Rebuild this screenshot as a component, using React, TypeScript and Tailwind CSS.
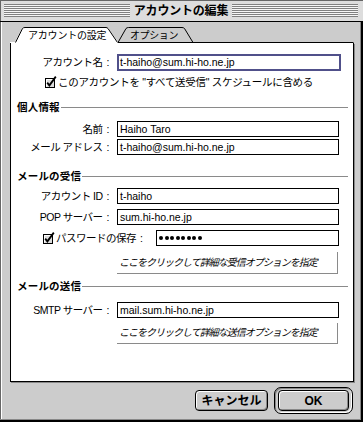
import React from "react";

function Check() {
  return (
    <svg width="12" height="12" viewBox="0 0 12 12" className="shrink-0">
      <rect x="0.5" y="2.5" width="9" height="9" fill="#dcdcdc" stroke="#000" />
      <path d="M1.5 10.5 V3.5 H8.5" fill="none" stroke="#fff" />
      <path d="M2.2 6.6 L4.4 9.4 L10.8 0.6" fill="none" stroke="#000" strokeWidth="1.8" />
    </svg>
  );
}

function Field({ value, className }: { value: string; className: string }) {
  return (
    <div className={`flex h-[16px] items-center border border-black bg-white pl-[2px] text-[10.5px] leading-none ${className}`}>
      {value}
    </div>
  );
}

function Label({ text }: { text: string }) {
  return (
    <div className="flex w-[101px] justify-end pr-[3px] text-[10.5px] leading-none tracking-[-0.5px]">
      <span>{text}</span>
      <span className="ml-[4px]">:</span>
    </div>
  );
}

function Row({ label, value, className }: { label: string; value: string; className: string }) {
  return (
    <div className={`flex items-center ${className}`}>
      <Label text={label} />
      <Field value={value} className="ml-[5px] w-[222px]" />
    </div>
  );
}

function Section({ title, className }: { title: string; className: string }) {
  return (
    <div className={`flex h-[12px] items-center pl-[6px] pr-[5px] ${className}`}>
      <span className="text-[10.5px] font-bold leading-none tracking-[0.2px]">{title}</span>
      <div className="ml-[1px] h-px flex-1 bg-[#8a8a8a]" />
    </div>
  );
}

function LinkButton({ text, className }: { text: string; className: string }) {
  return (
    <div className={`ml-[106px] flex w-[221px] items-center border-r border-b border-[#8a8a8a] bg-white pl-[2px] text-[10px] italic leading-none tracking-[-1px] ${className}`}>
      {text}
    </div>
  );
}

const Stripes = () => (
  <div className="h-[13px] flex-1 bg-[repeating-linear-gradient(to_bottom,#808080_0px,#808080_1px,#f6f6f6_1px,#f6f6f6_2px)]" />
);

export default function App() {
  return (
    <div className="relative flex h-[422px] w-[363px] flex-col bg-[#cccccc] font-['Liberation_Sans','Noto_Sans_CJK_JP',sans-serif] text-black shadow-[inset_-2px_-2px_0_#000,inset_-3px_-3px_0_#888,inset_1px_1px_0_#666,inset_2px_2px_0_#fff]">
      {/* title bar */}
      <div className="flex h-[22px] items-center border-b border-black bg-[#dddddd] pl-[4px] pr-[5px] shadow-[inset_1px_1px_0_#666]">
        <Stripes />
        <div className="px-[4px] text-[12px] font-bold leading-none tracking-[-0.2px]">アカウントの編集</div>
        <Stripes />
      </div>

      {/* tabs */}
      <div className="relative mt-[5px] flex h-[16px] items-center pt-[2px] text-[10px] leading-none">
        <svg className="absolute inset-0" width="363" height="16" viewBox="0 0 363 16">
          <path d="M118 15.5 L126 1.5 Q127 0.5 128.5 0.5 L182 0.5 Q183.5 0.5 184.5 1.5 L193 15.5" fill="#cccccc" stroke="#000" />
          <path d="M10.5 16 V15.5 H15.5 M117 15.5 H353.5" fill="none" stroke="#000" />
          <path d="M10 16 V15 H15 L22 1.5 Q23 0 25 0 L106 0 Q107.5 0 108.5 1.5 L118 15 V16 Z" fill="#fff" />
          <path d="M15.5 15.5 L22.5 1.5 Q23.3 0.5 25 0.5 L106 0.5 Q107.2 0.5 108 1.5 L117.5 15.5" fill="none" stroke="#000" />
        </svg>
        <span className="relative ml-[28px] w-[102px] tracking-[-0.2px]">アカウントの設定</span>
        <span className="relative tracking-[-0.4px]">オプション</span>
      </div>

      {/* panel */}
      <div className="ml-[10px] flex h-[339px] w-[344px] flex-col border-x border-b border-black bg-white shadow-[1px_1px_0_#888]">
        <div className="mt-[11px] flex items-center">
          <Label text="アカウント名" />
          <div className="ml-[5px] flex h-[17px] w-[224px] items-center border-2 border-[#50508a] bg-white pl-[1px] text-[10.5px] leading-none">
            t-haiho@sum.hi-ho.ne.jp
          </div>
        </div>
        <div className="mt-[5px] flex h-[12px] items-center pl-[34px] text-[10.5px] leading-none">
          <Check />
          <span className="ml-[1px] tracking-[-0.3px]">このアカウントを "すべて送受信" スケジュールに含める</span>
        </div>

        <Section title="個人情報" className="mt-[13px]" />
        <Row label="名前" value="Haiho Taro" className="mt-[8px]" />
        <Row label="メール アドレス" value="t-haiho@sum.hi-ho.ne.jp" className="mt-[2px]" />

        <Section title="メールの受信" className="mt-[15px]" />
        <Row label="アカウント ID" value="t-haiho" className="mt-[6px]" />
        <Row label="POP サーバー" value="sum.hi-ho.ne.jp" className="mt-[5px]" />
        <div className="mt-[5px] flex items-center pl-[32px]">
          <Check />
          <span className="ml-[1px] flex w-[100px] text-[10.5px] leading-none tracking-[-0.5px]">
            <span>パスワードの保存</span>
            <span className="ml-[4px]">:</span>
          </span>
          <div className="flex h-[16px] w-[183px] items-center gap-[1.5px] border border-black bg-white pl-[2px]">
            {Array.from({ length: 8 }).map((_, i) => (
              <span key={i} className="h-[4px] w-[4px] rounded-full bg-black" />
            ))}
          </div>
        </div>
        <LinkButton text="ここをクリックして詳細な受信オプションを指定" className="mt-[6px] h-[22px]" />

        <Section title="メールの送信" className="mt-[6px]" />
        <Row label="SMTP サーバー" value="mail.sum.hi-ho.ne.jp" className="mt-[10px]" />
        <LinkButton text="ここをクリックして詳細な送信オプションを指定" className="mt-[5px] h-[21px]" />
      </div>

      {/* buttons */}
      <div className="mt-[5px] flex items-center justify-end pr-[10px]">
        <div className="flex h-[21px] w-[73px] items-center justify-center rounded-[4px] border border-black bg-[#cccccc] text-[12px] font-bold leading-none shadow-[inset_1px_1px_0_#fff,inset_-1px_-1px_0_#888]">
          キャンセル
        </div>
        <div className="ml-[6px] flex h-[27px] w-[79px] items-center justify-center rounded-[7px] border border-black bg-[#cccccc] shadow-[inset_1px_1px_0_#888,inset_-1px_-1px_0_#fff]">
          <div className="flex h-[21px] w-[71px] items-center justify-center rounded-[4px] border border-black bg-[#cccccc] text-[12px] font-bold leading-none shadow-[inset_1px_1px_0_#fff,inset_-1px_-1px_0_#888]">
            OK
          </div>
        </div>
      </div>
    </div>
  );
}
